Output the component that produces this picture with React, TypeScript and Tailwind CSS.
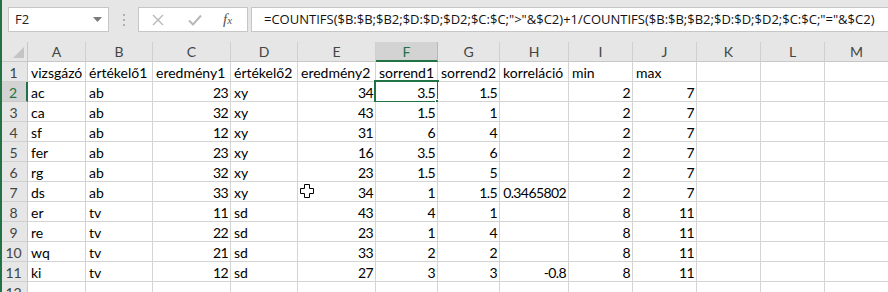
import React from "react";

const W = [58, 67, 78, 67, 78, 62, 62, 69, 64, 64, 64, 64, 64];
const LETTERS = ["A", "B", "C", "D", "E", "F", "G", "H", "I", "J", "K", "L", "M"];

const ROWS: (string | number)[][] = [
  ["vizsgázó", "értékelő1", "eredmény1", "értékelő2", "eredmény2", "sorrend1", "sorrend2", "korreláció", "min", "max"],
  ["ac", "ab", 23, "xy", 34, 3.5, 1.5, "", 2, 7],
  ["ca", "ab", 32, "xy", 43, 1.5, 1, "", 2, 7],
  ["sf", "ab", 12, "xy", 31, 6, 4, "", 2, 7],
  ["fer", "ab", 23, "xy", 16, 3.5, 6, "", 2, 7],
  ["rg", "ab", 32, "xy", 23, 1.5, 5, "", 2, 7],
  ["ds", "ab", 33, "xy", 34, 1, 1.5, 0.3465802, 2, 7],
  ["er", "tv", 11, "sd", 43, 4, 1, "", 8, 11],
  ["re", "tv", 22, "sd", 23, 1, 4, "", 8, 11],
  ["wq", "tv", 21, "sd", 33, 2, 2, "", 8, 11],
  ["ki", "tv", 12, "sd", 27, 3, 3, -0.8, 8, 11],
  [],
];

const cellFont = { fontFamily: "Lato, 'Noto Sans', sans-serif" };
const uiFont = { fontFamily: "'Open Sans', 'Noto Sans', sans-serif" };

function Cell({ v, w, selected }: { v: string | number | undefined; w: number; selected?: boolean }) {
  const isNum = typeof v === "number";
  return (
    <div
      className={`relative h-[20px] shrink-0 border-r border-b border-[#d4d4d4] bg-white text-[14px] leading-[21px] text-black whitespace-nowrap ${isNum ? "text-right pr-[2px] tracking-[-0.6px]" : "text-left pl-[3px]"}`}
      style={{ width: w, ...cellFont }}
    >
      {v === undefined ? "" : String(v)}
      {selected && (
        <>
          <div className="absolute left-[-2px] top-[-2px] right-[-2px] bottom-[-2px] border-2 border-[#217346] pointer-events-none" />
          <div className="absolute right-[-5px] bottom-[-5px] h-[7px] w-[7px] bg-[#217346] border border-white" />
        </>
      )}
    </div>
  );
}

export default function App() {
  return (
    <div className="relative h-[292px] w-[888px] overflow-hidden bg-[#e6e6e6]">
      <div className="absolute left-0 top-0 bottom-0 w-[2px] bg-[#217346] z-20" />
      {/* top bar */}
      <div className="flex h-[42px] items-start pt-[7px]">
        <div className="ml-[8px] flex h-[25px] w-[101px] items-center justify-between border border-[#c6c6c6] bg-white pl-[6px] pr-[6px] text-[13px] text-[#222]" style={uiFont}>
          <span>F2</span>
          <svg width="9" height="6" viewBox="0 0 9 6"><path d="M0 0 L9 0 L4.5 5 Z" fill="#7a7a7a" /></svg>
        </div>
        <div className="ml-[14px] mt-[7px] flex flex-col gap-[3px]">
          <div className="h-[2px] w-[2px] bg-[#b0b0b0]" />
          <div className="h-[2px] w-[2px] bg-[#b0b0b0]" />
          <div className="h-[2px] w-[2px] bg-[#b0b0b0]" />
        </div>
        <div className="ml-[13px] flex h-[25px] w-[110px] items-center border border-[#c6c6c6] bg-white">
          <svg className="ml-[13px]" width="12" height="12" viewBox="0 0 12 12">
            <path d="M1 1 L11 11 M11 1 L1 11" stroke="#b8b8b8" strokeWidth="1.4" />
          </svg>
          <svg className="ml-[24px]" width="14" height="12" viewBox="0 0 14 12">
            <path d="M1 6.5 L5 10.5 L13 1.5" stroke="#b8b8b8" strokeWidth="2" fill="none" />
          </svg>
          <span className="ml-[21px] text-[15px] italic text-[#555]" style={{ fontFamily: "'Liberation Serif', serif" }}>
            f<span className="text-[11px]">x</span>
          </span>
        </div>
        <div className="ml-[3px] flex h-[25px] flex-1 items-center border border-[#c6c6c6] border-r-0 bg-white pl-[12px] text-[13px] text-[#111] whitespace-nowrap overflow-hidden" style={uiFont}>
          =COUNTIFS($B:$B;$B2;$D:$D;$D2;$C:$C;"&gt;"&amp;$C2)+1/COUNTIFS($B:$B;$B2;$D:$D;$D2;$C:$C;"="&amp;$C2)
        </div>
      </div>
      {/* column headers */}
      <div className="flex h-[20px]">
        <div className="relative h-[20px] w-[28px] shrink-0 border-r border-b border-[#c8c8c8] bg-[#e6e6e6]">
          <svg className="absolute right-[3px] bottom-[3px]" width="11" height="11" viewBox="0 0 11 11">
            <path d="M11 0 L11 11 L0 11 Z" fill="#c4c4c4" />
          </svg>
        </div>
        {LETTERS.map((l, i) => {
          const sel = l === "F";
          return (
            <div
              key={l}
              className={`h-[20px] shrink-0 border-r text-center text-[14px] leading-[20px] ${sel ? "bg-[#d3d3d3] text-[#217346] border-b-2 border-b-[#217346] border-r-[#b8b8b8]" : "bg-[#e6e6e6] text-[#444] border-b border-b-[#c8c8c8] border-r-[#d0d0d0]"}`}
              style={{ width: W[i], ...cellFont }}
            >
              {l}
            </div>
          );
        })}
      </div>
      {/* rows */}
      {ROWS.map((row, r) => {
        const sel = r === 1;
        return (
          <div key={r} className="flex h-[20px]">
            <div
              className={`h-[20px] w-[28px] shrink-0 border-b text-center text-[14px] leading-[21px] ${sel ? "bg-[#d3d3d3] text-[#217346] border-r-2 border-r-[#217346] border-b-[#c8c8c8]" : "bg-[#e6e6e6] text-[#444] border-r border-r-[#c8c8c8] border-b-[#d0d0d0]"}`}
              style={cellFont}
            >
              {r + 1}
            </div>
            {W.map((w, c) => (
              <Cell key={c} v={row[c]} w={w} selected={sel && c === 5} />
            ))}
          </div>
        );
      })}
      {/* mouse cursor */}
      <svg className="absolute left-[300px] top-[184px] z-10" width="15" height="14" viewBox="0 0 15 14">
        <path
          d="M4.5 0.5 H9.5 V4.5 H13.5 V9.5 H9.5 V13.5 H4.5 V9.5 H0.5 V4.5 H4.5 Z"
          fill="white"
          stroke="black"
          strokeWidth="1"
        />
      </svg>
    </div>
  );
}
